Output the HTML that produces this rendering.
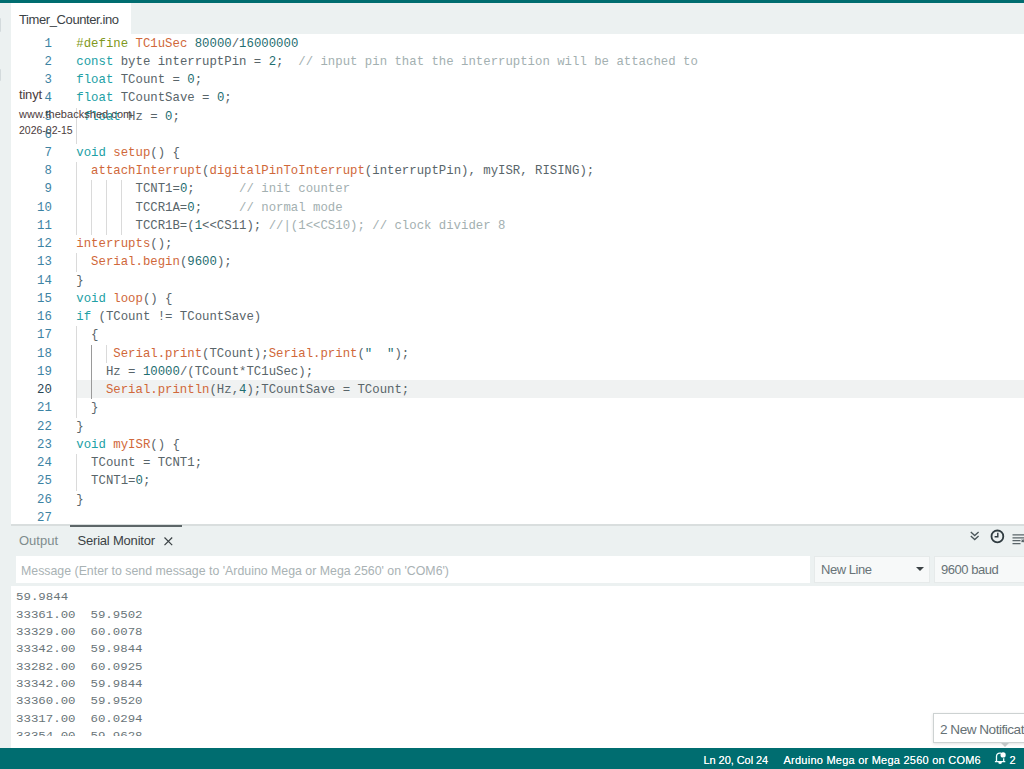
<!DOCTYPE html>
<html><head><meta charset="utf-8"><title>Timer_Counter - Arduino IDE</title>
<style>
*{box-sizing:border-box;margin:0;padding:0}
html,body{width:1024px;height:769px;overflow:hidden;background:#fff}
body{position:relative;font-family:"Liberation Sans",sans-serif;color:#4e5b61}
.abs{position:absolute}
#topbar{left:0;top:0;width:1024px;height:3px;background:#006d70}
#side{left:0;top:3px;width:11px;height:745px;background:#ecf1f1}
#tabbar{left:11px;top:3px;width:1013px;height:31px;background:#ecf1f1}
#tab{left:11px;top:3px;width:120px;height:31px;background:#fff}
#tabtxt{left:19px;top:11.5px;font-size:13px;line-height:16px;color:#3b4245;white-space:nowrap;letter-spacing:-0.4px}
#editor{left:0;top:0;width:1024px;height:523.5px;overflow:hidden}
.ln,.cl{position:absolute;font-family:"Liberation Mono",monospace;font-size:12.34px;line-height:18.24px;height:18.24px;white-space:pre}
.sl{transform:scaleY(0.92);transform-origin:0 3.5px}
.ln{left:11px;width:40.8px;text-align:right;color:#3d83a3}
.ln.cur{color:#2a4754}
.cl{left:76.3px;color:#59656a}
.k{color:#22a0a5}.f{color:#d0683a}.n{color:#1f6e71}.c{color:#a3b0b1}.p{color:#7f9820}.s{color:#1f6e71}
.g{position:absolute;width:1px;background:#dadada}
.g.a{background:#9a9a9a}
#curline{left:76.5px;width:948px;height:18.5px;background:#f0f2f2}
.wm{position:absolute;left:19px;color:#4b3c3c;white-space:nowrap}
#psep{left:11px;top:523.5px;width:1013px;height:2px;background:#d9dede}
#ptabs{left:11px;top:525.5px;width:1013px;height:30.5px;background:#ecf1f1}
#pact{left:69.5px;top:524.5px;width:112.5px;height:2.2px;background:#5d6668}
.pt{position:absolute;top:533px;font-size:13px;line-height:16px;white-space:nowrap}
#inrow{left:11px;top:556px;width:1013px;height:30px;background:#ecf1f1}
#inbox{left:16px;top:556px;width:794px;height:27px;background:#fff}
#intxt{left:21px;top:563px;font-size:12.35px;line-height:16px;color:#a9b2b4;white-space:nowrap}
.dd{position:absolute;top:556px;height:27px;background:#f7f9f9;border:1px solid #e6eaea;font-size:13px;line-height:25px;padding-left:6px;color:#687377;white-space:nowrap;letter-spacing:-0.46px}
#serial{left:11px;top:586px;width:1013px;height:149.5px;background:#fff;overflow:hidden}
.sl{position:absolute;left:5px;font-family:"Liberation Mono",monospace;font-size:12.41px;line-height:17.33px;color:#6a7579;white-space:pre}
#status{text-shadow:0 0 0.6px rgba(255,255,255,.8);left:0;top:747.5px;width:1024px;height:21.5px;background:#006d70;color:#fff;font-size:11px}
.st{position:absolute;top:4.5px;line-height:16px;white-space:nowrap}
#notif{left:933px;top:713px;width:120px;height:30px;background:#fff;border:1px solid #cdd2d2;box-shadow:0 1px 3px rgba(0,0,0,.12);font-size:13.6px;line-height:31px;padding-left:6px;color:#667175;white-space:nowrap;letter-spacing:-0.5px}
#notifp{left:1001px;top:743px;width:0;height:0;border-left:4px solid transparent;border-right:4px solid transparent;border-top:4px solid #c3c8c8}
svg{position:absolute;overflow:visible}
</style></head><body>
<div id="topbar" class="abs"></div>
<div id="side" class="abs"></div>
<div class="abs" style="left:0;top:18px;width:1.2px;height:14px;background:#d3dadc;border-radius:0 1px 1px 0"></div>
<div class="abs" style="left:0;top:69px;width:1.2px;height:12px;background:#d3dadc;border-radius:0 1px 1px 0"></div>
<div id="tabbar" class="abs"></div>
<div id="tab" class="abs"></div>
<div id="tabtxt" class="abs">Timer_Counter.ino</div>
<div id="editor" class="abs">
<div id="curline" class="abs" style="top:379.71px"></div>
<div class="ln" style="top:34.55px">1</div>
<div class="cl" style="top:34.55px"><span class="p">#define</span> <span class="f">TC1uSec</span> <span class="n">80000</span>/<span class="n">16000000</span></div>
<div class="ln" style="top:52.79px">2</div>
<div class="cl" style="top:52.79px"><span class="k">const</span> byte interruptPin = <span class="n">2</span>;  <span class="c">// input pin that the interruption will be attached to</span></div>
<div class="ln" style="top:71.03px">3</div>
<div class="cl" style="top:71.03px"><span class="k">float</span> TCount = <span class="n">0</span>;</div>
<div class="ln" style="top:89.27px">4</div>
<div class="cl" style="top:89.27px"><span class="k">float</span> TCountSave = <span class="n">0</span>;</div>
<div class="ln" style="top:107.51px">5</div>
<div class="cl" style="top:107.51px"> <span class="k">float</span> Hz = <span class="n">0</span>;</div>
<div class="ln" style="top:125.75px">6</div>
<div class="ln" style="top:143.99px">7</div>
<div class="cl" style="top:143.99px"><span class="k">void</span> <span class="f">setup</span>() {</div>
<div class="ln" style="top:162.23px">8</div>
<div class="cl" style="top:162.23px">  <span class="f">attachInterrupt</span>(<span class="f">digitalPinToInterrupt</span>(interruptPin), myISR, RISING);</div>
<div class="ln" style="top:180.47px">9</div>
<div class="cl" style="top:180.47px">        TCNT1=<span class="n">0</span>;      <span class="c">// init counter</span></div>
<div class="ln" style="top:198.71px">10</div>
<div class="cl" style="top:198.71px">        TCCR1A=<span class="n">0</span>;     <span class="c">// normal mode</span></div>
<div class="ln" style="top:216.95px">11</div>
<div class="cl" style="top:216.95px">        TCCR1B=(<span class="n">1</span>&lt;&lt;CS11); <span class="c">//|(1&lt;&lt;CS10); // clock divider 8</span></div>
<div class="ln" style="top:235.19px">12</div>
<div class="cl" style="top:235.19px"><span class="f">interrupts</span>();</div>
<div class="ln" style="top:253.43px">13</div>
<div class="cl" style="top:253.43px">  <span class="f">Serial.begin</span>(<span class="n">9600</span>);</div>
<div class="ln" style="top:271.67px">14</div>
<div class="cl" style="top:271.67px">}</div>
<div class="ln" style="top:289.91px">15</div>
<div class="cl" style="top:289.91px"><span class="k">void</span> <span class="f">loop</span>() {</div>
<div class="ln" style="top:308.15px">16</div>
<div class="cl" style="top:308.15px"><span class="k">if</span> (TCount != TCountSave)</div>
<div class="ln" style="top:326.39px">17</div>
<div class="cl" style="top:326.39px">  {</div>
<div class="ln" style="top:344.63px">18</div>
<div class="cl" style="top:344.63px">     <span class="f">Serial.print</span>(TCount);<span class="f">Serial.print</span>(<span class="s">"  "</span>);</div>
<div class="ln" style="top:362.87px">19</div>
<div class="cl" style="top:362.87px">    Hz = <span class="n">10000</span>/(TCount*TC1uSec);</div>
<div class="ln cur" style="top:381.11px">20</div>
<div class="cl" style="top:381.11px">    <span class="f">Serial.println</span>(Hz,<span class="n">4</span>);TCountSave = TCount;</div>
<div class="ln" style="top:399.35px">21</div>
<div class="cl" style="top:399.35px">  }</div>
<div class="ln" style="top:417.59px">22</div>
<div class="cl" style="top:417.59px">}</div>
<div class="ln" style="top:435.83px">23</div>
<div class="cl" style="top:435.83px"><span class="k">void</span> <span class="f">myISR</span>() {</div>
<div class="ln" style="top:454.07px">24</div>
<div class="cl" style="top:454.07px">  TCount = TCNT1;</div>
<div class="ln" style="top:472.31px">25</div>
<div class="cl" style="top:472.31px">  TCNT1=<span class="n">0</span>;</div>
<div class="ln" style="top:490.55px">26</div>
<div class="cl" style="top:490.55px">}</div>
<div class="ln" style="top:508.79px">27</div>
<div class="g" style="left:76.0px;top:107.51px;height:36.48px"></div>
<div class="g" style="left:76.0px;top:162.23px;height:72.96px"></div>
<div class="g" style="left:91.0px;top:180.47px;height:54.72px"></div>
<div class="g" style="left:105.7px;top:180.47px;height:54.72px"></div>
<div class="g" style="left:120.8px;top:180.47px;height:54.72px"></div>
<div class="g" style="left:76.0px;top:253.43px;height:18.24px"></div>
<div class="g" style="left:76.0px;top:326.39px;height:91.20px"></div>
<div class="g a" style="left:91.0px;top:344.63px;height:54.72px"></div>
<div class="g" style="left:105.7px;top:344.63px;height:18.24px"></div>
<div class="g" style="left:76.0px;top:454.07px;height:36.48px"></div>
</div>
<div class="wm" style="top:86.6px;font-size:13px;line-height:16px;letter-spacing:-0.2px">tinyt</div>
<div class="wm" style="top:107.2px;font-size:11px;line-height:14px;letter-spacing:0.04px">www.thebackshed.com</div>
<div class="wm" style="top:122.8px;font-size:10.5px;line-height:14px">2026-02-15</div>
<div id="psep" class="abs"></div>
<div id="ptabs" class="abs"></div>
<div id="pact" class="abs"></div>
<div class="pt" style="left:19px;color:#7f8c8d">Output</div>
<div class="pt" style="left:77.5px;color:#3b4245;letter-spacing:-0.2px">Serial Monitor</div>
<svg style="left:164px;top:537px" width="9" height="9" viewBox="0 0 9 9"><path d="M0.5 0.5L8.2 8.2M8.2 0.5L0.5 8.2" stroke="#3b4245" stroke-width="1.2" fill="none"/></svg>
<!-- panel toolbar icons -->
<svg style="left:970px;top:531px" width="10" height="10" viewBox="0 0 10 10"><path d="M0.8 1L4.7 4.6L8.6 1M0.8 5L4.7 8.6L8.6 5" stroke="#4a5559" stroke-width="1.3" fill="none"/></svg>
<svg style="left:990px;top:529px" width="15" height="15" viewBox="0 0 15 15"><circle cx="7.4" cy="7.4" r="5.9" stroke="#2f3b40" stroke-width="1.8" fill="none"/><path d="M7.8 3.8V7.8H4.6" stroke="#2f3b40" stroke-width="1.4" fill="none"/></svg>
<svg style="left:1012px;top:534px" width="12" height="12" viewBox="0 0 12 12"><path d="M0.5 0.9H12M0.5 3.8H12M0.5 6.7H8.5M0.5 9.6H8.5M9.6 5.6L12 8M12 5.6L9.6 8" stroke="#5a6569" stroke-width="1.2" fill="none"/></svg>
<div id="inrow" class="abs"></div>
<div id="inbox" class="abs"></div>
<div id="intxt" class="abs">Message (Enter to send message to 'Arduino Mega or Mega 2560' on 'COM6')</div>
<div class="dd" style="left:814px;width:116px">New Line</div>
<div class="abs" style="left:916.3px;top:567.3px;width:0;height:0;border-left:4px solid transparent;border-right:4px solid transparent;border-top:4.3px solid #3b4245"></div>
<div class="dd" style="left:934px;width:100px">9600 baud</div>
<div id="serial" class="abs">
<div class="sl" style="top:4.20px">59.9844</div>
<div class="sl" style="top:21.53px">33361.00  59.9502</div>
<div class="sl" style="top:38.86px">33329.00  60.0078</div>
<div class="sl" style="top:56.19px">33342.00  59.9844</div>
<div class="sl" style="top:73.52px">33282.00  60.0925</div>
<div class="sl" style="top:90.85px">33342.00  59.9844</div>
<div class="sl" style="top:108.18px">33360.00  59.9520</div>
<div class="sl" style="top:125.51px">33317.00  60.0294</div>
<div class="sl" style="top:142.84px">33354.00  59.9628</div>
</div>
<div id="notif" class="abs">2 New Notifications</div>
<div id="notifp" class="abs"></div>
<div id="status" class="abs">
<div class="st" style="left:703.5px;letter-spacing:-0.06px">Ln 20, Col 24</div>
<div class="st" style="left:783.5px;letter-spacing:0.24px">Arduino Mega or Mega 2560 on COM6</div>
<svg style="left:994px;top:4px" width="13" height="13" viewBox="0 0 13 13"><path d="M2.5 9.3V4.4C2.5 2.3 3.9 1.2 5.9 1.2H7.2M9.7 6.2V9.3M0.9 9.6H11.3" stroke="#f0ffff" stroke-width="1.3" fill="none"/><path d="M4.4 10H7.8V11.2Q6.1 12.6 4.4 11.2Z" fill="#fff"/><circle cx="9.1" cy="2.9" r="2.6" fill="#fff"/></svg>
<div class="st" style="left:1009.5px">2</div>
</div>
</body></html>
